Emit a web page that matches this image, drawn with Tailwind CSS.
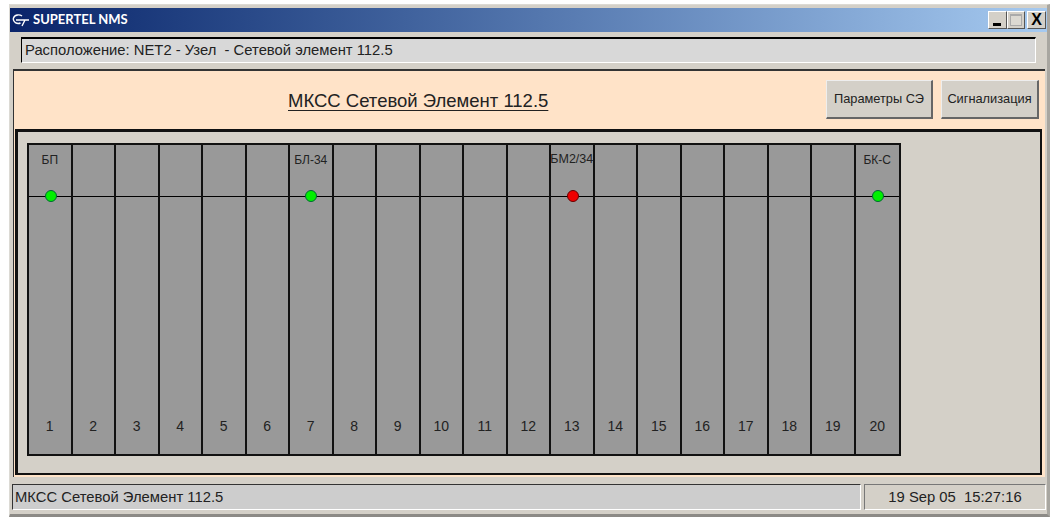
<!DOCTYPE html>
<html><head><meta charset="utf-8"><script src="https://cdn.jsdelivr.net/npm/@tailwindcss/browser@4"></script></head>
<body class="bg-white w-[1064px] h-[529px] overflow-hidden font-['Liberation_Sans',sans-serif] text-[#222]">
<div class="ml-[9px] mt-[4px] w-[1041px] h-[513px] bg-[#d4d0c8] border-t-[1px] border-l-[1px] border-t-[#dcdad4] border-l-[#dcdad4] border-r-[3px] border-r-[#a8a6a0] border-b-[3px] border-b-[#8c8a86] flex flex-col">
  <div class="h-[24px] mt-[3px] bg-gradient-to-r from-[#0a246a] to-[#a6caf0] flex items-center pl-[2px] pr-[1px] shrink-0">
    <svg class="w-[20px] h-[14px]" viewBox="0 0 20 14" fill="none" stroke="white" stroke-width="1.4"><path d="M10 3 C8 1.5 3 1 1.5 5 C0.5 9 5 11.5 8.5 10"/><path d="M4 7 H17 M13 7 L10 13"/></svg>
    <span class="text-white font-bold text-[13px] font-['Lato',sans-serif] ml-[1px]">SUPERTEL NMS</span>
    <div class="ml-auto flex items-center">
      <div class="w-[19px] h-[18px] bg-[#d4d0c8] border border-t-white border-l-white border-r-[#555] border-b-[#555] flex items-end justify-center pb-[2px]"><div class="w-[8px] h-[3px] mr-[1px] bg-black"></div></div>
      <div class="w-[18px] h-[18px] bg-[#d4d0c8] border border-t-white border-l-white border-r-[#555] border-b-[#555] flex items-center justify-center"><div class="w-[12px] h-[12px] border border-[#aaa] border-t-2 bg-[#dcd9d2]"></div></div>
      <div class="w-[19px] h-[18px] ml-[2px] bg-[#d4d0c8] border border-t-white border-l-white border-r-[#555] border-b-[#555] flex items-center justify-center text-[16px] font-bold text-black leading-none">X</div>
    </div>
  </div>
  <div class="mt-[5px] ml-[11px] w-[1015px] h-[26px] bg-[#d8d8d8] border-t-2 border-l-[1px] border-t-black border-l-black border-r border-b border-r-white border-b-white flex items-center pl-[3px] text-[14.8px] shrink-0">Расположение: NET2 - Узел&nbsp; - Сетевой элемент 112.5</div>
  <div class="mt-[6px] ml-[3px] w-[1032px] h-[408px] bg-[#ffe3c8] border-t-2 border-l border-t-[#333] border-l-[#333] flex flex-col shrink-0">
    <div class="h-[58px] flex items-center shrink-0 pl-[274px] pr-[6px]">
      <span class="text-[18.5px] underline underline-offset-[3px] decoration-1 mt-[1px]">МКСС Сетевой Элемент 112.5</span>
      <button class="ml-auto w-[107px] h-[39px] -mt-[1px] bg-[#d4d0c8] border-t border-l border-t-[#eee] border-l-[#eee] border-r-2 border-b-2 border-r-[#666] border-b-[#666] text-[12.8px]">Параметры СЭ</button>
      <button class="ml-[8px] w-[98px] h-[39px] -mt-[1px] bg-[#d4d0c8] border-t border-l border-t-[#eee] border-l-[#eee] border-r-2 border-b-2 border-r-[#666] border-b-[#666] text-[12.8px]">Сигнализация</button>
    </div>
    <div class="ml-[1px] mr-[1px] w-[1027px] h-[346px] bg-[#d4d0c8] border-[3px] border-[#111] border-r-2 border-b-2 pl-[9px] pt-[11px]">
      <div class="w-[874px] h-[313px] border-2 border-[#111] grid grid-cols-[repeat(20,minmax(0,1fr))] bg-[#999]">
        <div class="border-r-2 border-[#111] flex flex-col text-[12px]"><div class="relative h-[52px] border-b border-black text-center pt-[6px] text-[#222]">БП<div class="absolute left-[16px] top-[45px] w-[12px] h-[12px] rounded-full bg-[#00f000] border border-[#063]"></div></div><div class="mt-auto mb-[17px] text-center text-[14px]">1</div></div>
        <div class="border-r-2 border-[#111] flex flex-col"><div class="h-[52px] border-b border-black"></div><div class="mt-auto mb-[17px] text-center text-[14px]">2</div></div>
        <div class="border-r-2 border-[#111] flex flex-col"><div class="h-[52px] border-b border-black"></div><div class="mt-auto mb-[17px] text-center text-[14px]">3</div></div>
        <div class="border-r-2 border-[#111] flex flex-col"><div class="h-[52px] border-b border-black"></div><div class="mt-auto mb-[17px] text-center text-[14px]">4</div></div>
        <div class="border-r-2 border-[#111] flex flex-col"><div class="h-[52px] border-b border-black"></div><div class="mt-auto mb-[17px] text-center text-[14px]">5</div></div>
        <div class="border-r-2 border-[#111] flex flex-col"><div class="h-[52px] border-b border-black"></div><div class="mt-auto mb-[17px] text-center text-[14px]">6</div></div>
        <div class="border-r-2 border-[#111] flex flex-col text-[12px]"><div class="relative h-[52px] border-b border-black text-center pt-[6px] whitespace-nowrap">БЛ-34<div class="absolute left-[15px] top-[45px] w-[12px] h-[12px] rounded-full bg-[#00f000] border border-[#063]"></div></div><div class="mt-auto mb-[17px] text-center text-[14px]">7</div></div>
        <div class="border-r-2 border-[#111] flex flex-col"><div class="h-[52px] border-b border-black"></div><div class="mt-auto mb-[17px] text-center text-[14px]">8</div></div>
        <div class="border-r-2 border-[#111] flex flex-col"><div class="h-[52px] border-b border-black"></div><div class="mt-auto mb-[17px] text-center text-[14px]">9</div></div>
        <div class="border-r-2 border-[#111] flex flex-col"><div class="h-[52px] border-b border-black"></div><div class="mt-auto mb-[17px] text-center text-[14px]">10</div></div>
        <div class="border-r-2 border-[#111] flex flex-col"><div class="h-[52px] border-b border-black"></div><div class="mt-auto mb-[17px] text-center text-[14px]">11</div></div>
        <div class="border-r-2 border-[#111] flex flex-col"><div class="h-[52px] border-b border-black"></div><div class="mt-auto mb-[17px] text-center text-[14px]">12</div></div>
        <div class="border-r-2 border-[#111] flex flex-col text-[12.5px]"><div class="relative h-[52px] border-b border-black flex justify-center pt-[5px] whitespace-nowrap">БМ2/34<div class="absolute left-[16px] top-[45px] w-[12px] h-[12px] rounded-full bg-[#f00000] border border-[#600]"></div></div><div class="mt-auto mb-[17px] text-center text-[14px]">13</div></div>
        <div class="border-r-2 border-[#111] flex flex-col"><div class="h-[52px] border-b border-black"></div><div class="mt-auto mb-[17px] text-center text-[14px]">14</div></div>
        <div class="border-r-2 border-[#111] flex flex-col"><div class="h-[52px] border-b border-black"></div><div class="mt-auto mb-[17px] text-center text-[14px]">15</div></div>
        <div class="border-r-2 border-[#111] flex flex-col"><div class="h-[52px] border-b border-black"></div><div class="mt-auto mb-[17px] text-center text-[14px]">16</div></div>
        <div class="border-r-2 border-[#111] flex flex-col"><div class="h-[52px] border-b border-black"></div><div class="mt-auto mb-[17px] text-center text-[14px]">17</div></div>
        <div class="border-r-2 border-[#111] flex flex-col"><div class="h-[52px] border-b border-black"></div><div class="mt-auto mb-[17px] text-center text-[14px]">18</div></div>
        <div class="border-r-2 border-[#111] flex flex-col"><div class="h-[52px] border-b border-black"></div><div class="mt-auto mb-[17px] text-center text-[14px]">19</div></div>
        <div class="flex flex-col text-[12px]"><div class="relative h-[52px] border-b border-black text-center pt-[6px]">БК-С<div class="absolute left-[16px] top-[45px] w-[12px] h-[12px] rounded-full bg-[#00f000] border border-[#063]"></div></div><div class="mt-auto mb-[17px] text-center text-[14px]">20</div></div>
      </div>
    </div>
  </div>
  <div class="mt-[7px] ml-[2px] flex shrink-0 text-[14.8px]">
    <div class="w-[849px] h-[26px] bg-[#cdcdcd] border-t border-l border-t-[#333] border-l-[#333] border-r border-b border-r-white border-b-white flex items-center pl-[2px]">МКСС Сетевой Элемент 112.5</div>
    <div class="ml-[3px] w-[182px] h-[26px] border-t border-l border-t-[#777] border-l-[#777] border-r border-b border-r-white border-b-white flex items-center justify-center">19 Sep 05&nbsp; 15:27:16</div>
  </div>
</div>
</body></html>
